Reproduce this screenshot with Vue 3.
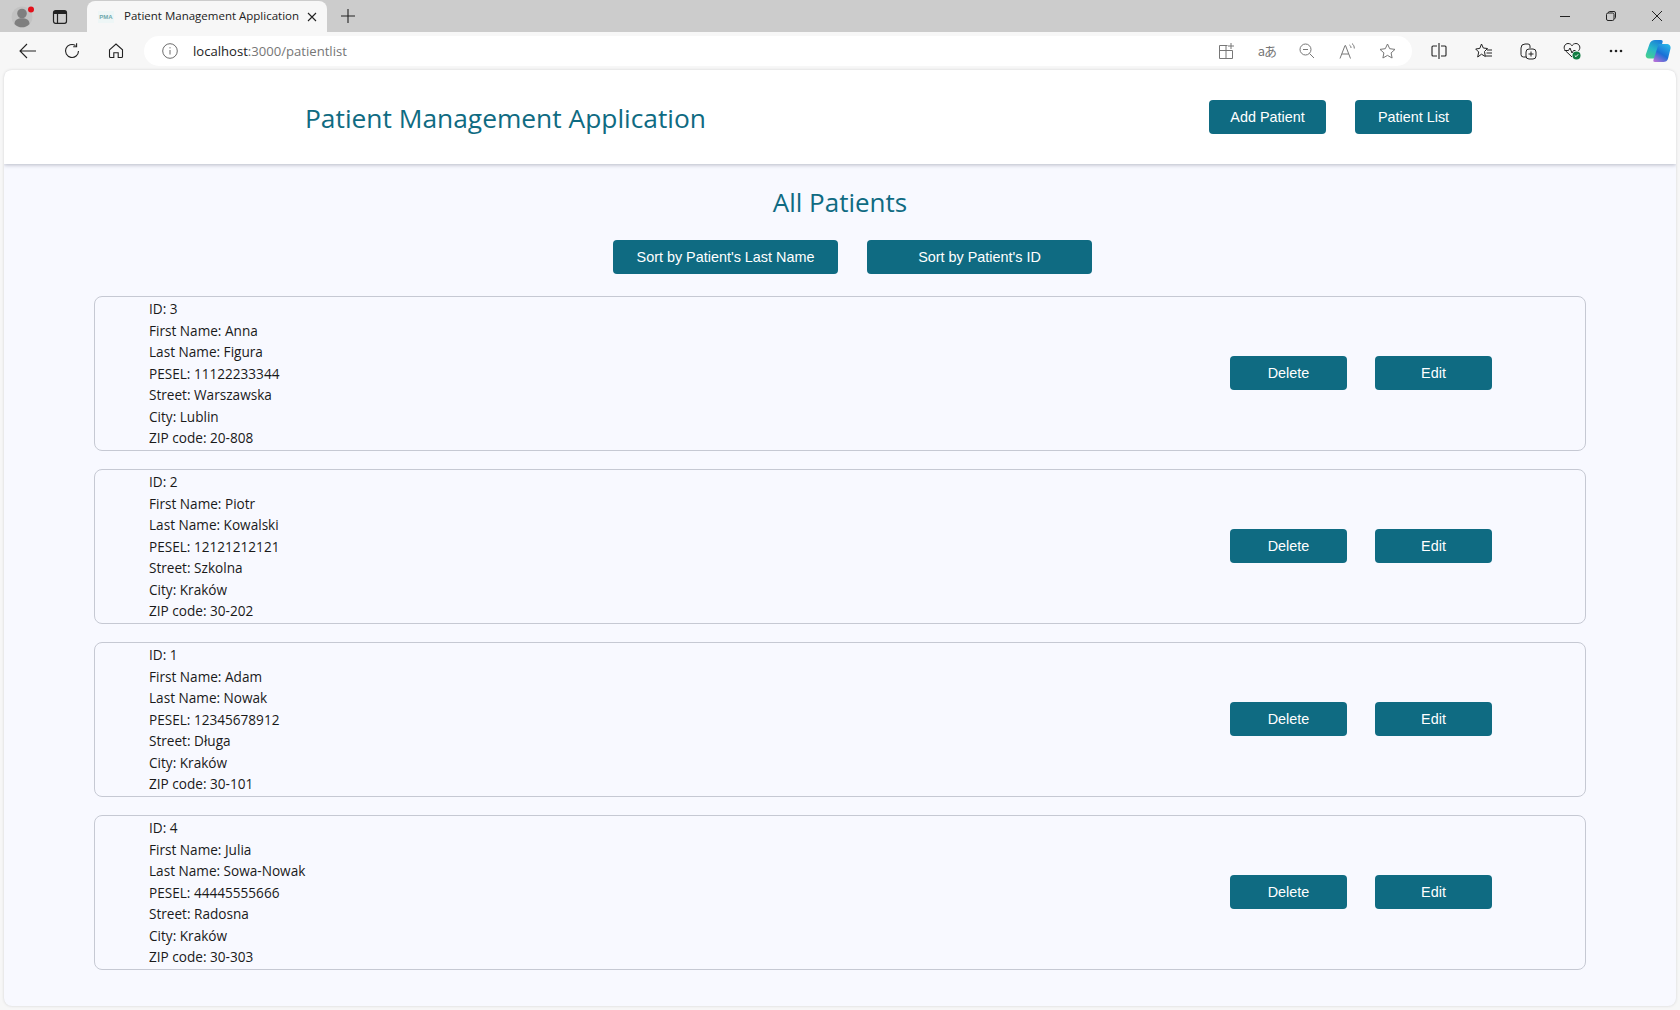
<script setup>
import { ref } from "vue"

const patients = ref([
  { id: 3, first: "Anna", last: "Figura", pesel: "11122233344", street: "Warszawska", city: "Lublin", zip: "20-808" },
  { id: 2, first: "Piotr", last: "Kowalski", pesel: "12121212121", street: "Szkolna", city: "Kraków", zip: "30-202" },
  { id: 1, first: "Adam", last: "Nowak", pesel: "12345678912", street: "Długa", city: "Kraków", zip: "30-101" },
  { id: 4, first: "Julia", last: "Sowa-Nowak", pesel: "44445555666", street: "Radosna", city: "Kraków", zip: "30-303" },
])
</script>

<template>
  <div class="window">
    <div class="tabstrip">
      <div class="avatar">
        <svg width="26" height="26" viewBox="0 0 26 26">
          <circle cx="12" cy="14" r="10.500" fill="#c2c2c2" />
          <circle cx="12" cy="10.500" r="4.800" fill="#7f7f7f" />
          <path d="M4.500 21c0-4.500 3.500-5.800 7.500-5.800s7.500 1.300 7.500 5.800c-2 2.500-4.800 3.300-7.500 3.300s-5.500-.8-7.500-3.300z" fill="#7f7f7f" />
          <circle cx="21" cy="6.500" r="3" fill="#e3101a" />
        </svg>
      </div>
      <div class="tabs-btn">
        <svg width="16" height="16" viewBox="0 0 16 16" fill="none" stroke="#222" stroke-width="1.200">
          <rect x="1.500" y="1.700" width="13" height="12.600" rx="2" />
          <path d="M5.500 5v9.300" />
          <path d="M2 2h12v3H2z" fill="#222" stroke="none" />
        </svg>
      </div>
      <div class="tab">
        <span class="favicon">PMA</span>
        <span class="tab-title">Patient Management Application</span>
        <svg class="tab-close" width="10" height="10" viewBox="0 0 10 10" stroke="#222" stroke-width="1.100">
          <path d="M1 1l8 8M9 1l-8 8" />
        </svg>
      </div>
      <svg class="new-tab" width="14" height="14" viewBox="0 0 14 14" stroke="#222" stroke-width="1.100">
        <path d="M7 0v14M0 7h14" />
      </svg>
      <div class="win-controls">
        <svg width="10" height="10" viewBox="0 0 10 10" stroke="#222" stroke-width="1"><path d="M0 5.500h10" /></svg>
        <svg width="10" height="10" viewBox="0 0 10 10" fill="none" stroke="#222" stroke-width="1">
          <rect x=".5" y="2" width="7.500" height="7.500" rx="1.500" />
          <path d="M2.500 2V1.500A1 1 0 0 1 3.500.5h4.500a1.500 1.500 0 0 1 1.500 1.500v4.500a1 1 0 0 1-1 1" />
        </svg>
        <svg width="10" height="10" viewBox="0 0 10 10" stroke="#222" stroke-width="1"><path d="M0 0l10 10M10 0L0 10" /></svg>
      </div>
    </div>

    <div class="toolbar">
      <div class="nav">
        <svg width="18" height="16" viewBox="0 0 18 16" fill="none" stroke="#222" stroke-width="1.100"><path d="M17 8H1M8 1L1 8l7 7" /></svg>
        <svg width="16" height="16" viewBox="0 0 16 16" fill="none" stroke="#222" stroke-width="1.100">
          <path d="M14.500 8A6.500 6.500 0 1 1 11.500 2.500" />
          <path d="M12.600.3v3.400h-3.400" />
        </svg>
        <svg class="home" width="16" height="16" viewBox="0 0 16 16" fill="none" stroke="#222" stroke-width="1.100">
          <path d="M1.500 6.800L8 1l6.500 5.800V13.500a1 1 0 0 1-1 1H10.200V9.800H5.800v4.700H2.500a1 1 0 0 1-1-1z" />
        </svg>
      </div>
      <div class="address">
        <svg class="info" width="16" height="16" viewBox="0 0 16 16" fill="none" stroke="#6d6d6d" stroke-width="1">
          <circle cx="8" cy="8" r="7.300" />
          <path d="M8 7v4.500M8 4.200v1.200" />
        </svg>
        <span class="url">localhost<span class="url-rest">:3000/patientlist</span></span>
        <div class="addr-icons">
          <svg width="16" height="16" viewBox="0 0 16 16" fill="none" stroke="#777" stroke-width="1">
            <path d="M9.500 2.500H1.500v13h13V7.500H1.500M8 2.500v13M13 0v6M10 3h6" />
          </svg>
          <span class="translate">aあ</span>
          <svg class="zoom-out" width="16" height="16" viewBox="0 0 16 16" fill="none" stroke="#777" stroke-width="1">
            <circle cx="6.500" cy="6.500" r="5.500" /><path d="M4 6.500h5M10.500 10.500L15 15" />
          </svg>
          <svg width="16" height="16" viewBox="0 0 16 16" fill="none" stroke="#777" stroke-width="1">
            <path d="M1 15.500L6 2.500h.5L11.500 15.500M2.800 11h7M10.500 2c1 .7 1.500 1.700 1.500 3M13 .5c1.500 1.200 2.300 2.800 2.300 5" />
          </svg>
          <svg width="17" height="16" viewBox="0 0 17 16" fill="none" stroke="#777" stroke-width="1">
            <path d="M8.500 1l2.200 4.700 5.300.7-3.900 3.500 1 5.100-4.600-2.600-4.600 2.600 1-5.100L1 6.400l5.300-.7z" />
          </svg>
        </div>
      </div>
      <div class="tools">
        <svg width="16" height="16" viewBox="0 0 16 16" fill="none" stroke="#222" stroke-width="1.100">
          <path d="M8 0v16M6 3H2a1 1 0 0 0-1 1v8a1 1 0 0 0 1 1h4M10 3h4a1 1 0 0 1 1 1v8a1 1 0 0 1-1 1h-4" />
        </svg>
        <svg class="fav" width="18" height="16" viewBox="0 0 18 16" fill="none" stroke="#222" stroke-width="1">
          <path d="M6.500 1l1.800 4 4.200.5-3 3 .8 5-3.800-2.300L2.700 14l1-5-3-3 4.100-.6zM12 7h5M11.500 10h5.500M10.500 13h6.500" />
        </svg>
        <svg width="17" height="17" viewBox="0 0 17 17" fill="none" stroke="#222" stroke-width="1">
          <path d="M6 14H3.500A2.500 2.500 0 0 1 1 11.500V5a4 4 0 0 1 4-4h3a2 2 0 0 1 2 2v2" />
          <rect x="6" y="6" width="10" height="10" rx="3" />
          <path d="M11 8.500v5M8.500 11h5" />
        </svg>
        <svg width="18" height="18" viewBox="0 0 18 18" fill="none" stroke="#222" stroke-width="1">
          <path d="M9 15L2.500 8.800C-.5 5.500 2 1.500 5 1.500c2 0 3.300 1 4 2.300.7-1.300 2-2.300 4-2.300 3 0 5.500 4 2.500 7.300" />
          <path d="M1.500 8.500h4l1.500-2.500 2 5 1.500-2.500h2" />
          <circle cx="13.500" cy="13.500" r="4" fill="#107c41" stroke="none" />
          <path d="M11.800 13.500l1.200 1.200 2.200-2.400" stroke="#fff" />
        </svg>
        <svg class="dots" width="14" height="4" viewBox="0 0 14 4" fill="#222">
          <circle cx="2" cy="2" r="1.300" /><circle cx="7" cy="2" r="1.300" /><circle cx="12" cy="2" r="1.300" />
        </svg>
        <svg class="copilot" width="26" height="24" viewBox="0 0 26 24">
          <defs>
            <linearGradient id="cpa" x1="0.700" y1="0" x2="0.200" y2="1">
              <stop offset="0" stop-color="#1b7fd8" /><stop offset=".5" stop-color="#28b6c8" /><stop offset="1" stop-color="#46d08e" />
            </linearGradient>
            <linearGradient id="cpb" x1="0.800" y1="0" x2="0.200" y2="1">
              <stop offset="0" stop-color="#27b5e8" /><stop offset=".55" stop-color="#1a6fd6" /><stop offset="1" stop-color="#b06fd8" />
            </linearGradient>
          </defs>
          <path d="M10 1h6c1.500 0 2 1 1.500 2.500L13 17c-.7 1.800-2 2.500-4 2.500H4c-2.500 0-3.800-1.800-3.200-4L4.500 5C5.400 2.300 7.500 1 10 1z" fill="url(#cpa)" />
          <path d="M14 5h7.500c2.800 0 4.500 1.800 4 4.500l-2.300 9.500c-.7 3-2.700 4-5 4H10c-1.500 0-2-1-1.500-2.300L13 7c.3-1.300.5-2 1-2z" fill="url(#cpb)" />
        </svg>
      </div>
    </div>

    <div class="page">
      <header class="app-header">
        <h1 class="app-title">Patient Management Application</h1>
        <nav class="btn-row">
          <button class="btn">Add Patient</button>
          <button class="btn">Patient List</button>
        </nav>
      </header>

      <h2 class="list-title">All Patients</h2>
      <div class="sort-row">
        <button class="btn btn-wide">Sort by Patient's Last Name</button>
        <button class="btn btn-wide">Sort by Patient's ID</button>
      </div>

      <ul class="patients">
        <li v-for="p in patients" :key="p.id" class="patient">
          <div class="details">
            <div>ID: {{ p.id }}</div>
            <div>First Name: {{ p.first }}</div>
            <div>Last Name: {{ p.last }}</div>
            <div>PESEL: {{ p.pesel }}</div>
            <div>Street: {{ p.street }}</div>
            <div>City: {{ p.city }}</div>
            <div>ZIP code: {{ p.zip }}</div>
          </div>
          <div class="btn-row row-actions">
            <button class="btn">Delete</button>
            <button class="btn">Edit</button>
          </div>
        </li>
      </ul>
    </div>
  </div>
</template>

<style scoped>
.window {
  height: 1010px;
  display: flex;
  flex-direction: column;
  background: #f7f7f7;
  overflow: hidden;
}

.tabstrip {
  height: 32px;
  background: #cccccc;
  display: flex;
  align-items: center;
  flex: none;
}
.avatar {
  width: 26px;
  height: 26px;
  margin-left: 10px;
}
.tabs-btn {
  margin-left: 16px;
  display: flex;
  margin-top: 1px;
}
.tab {
  width: 240px;
  height: 31px;
  margin-left: 19px;
  margin-top: 1px;
  background: #f7f7f7;
  border-radius: 8px 8px 0 0;
  display: flex;
  align-items: center;
  flex: none;
}
.favicon {
  width: 16px;
  margin-left: 11px;
  font: 700 6px "Liberation Sans", sans-serif;
  color: #6fa8ad;
  background: #eef6f6;
  text-align: center;
  line-height: 12px;
}
.tab-title {
  margin-left: 10px;
  margin-top: -1px;
  width: 179px;
  font: 11.500px/16px "Open Sans", sans-serif;
  color: #222;
  white-space: nowrap;
}
.tab-close {
  margin-left: 4px;
}
.new-tab {
  margin-left: 14px;
}
.win-controls {
  margin-left: auto;
  margin-right: 18px;
  display: flex;
  gap: 36px;
}

.toolbar {
  height: 38px;
  display: flex;
  align-items: center;
  flex: none;
}
.nav {
  display: flex;
  align-items: center;
  gap: 27px;
  margin-left: 19px;
  width: 125px;
}
.home {
  margin-left: 1px;
}
.address {
  width: 1268px;
  height: 30px;
  background: #fff;
  border-radius: 15px;
  display: flex;
  align-items: center;
}
.info {
  margin-left: 18px;
}
.url {
  margin-left: 15px;
  font: 13.100px "Open Sans", sans-serif;
  color: #222;
}
.url-rest {
  color: #767676;
}
.addr-icons {
  margin-left: auto;
  margin-right: 16px;
  display: flex;
  align-items: center;
  gap: 24px;
}
.translate {
  font: 13px/16px "Noto Sans CJK JP", "Noto Sans", sans-serif;
  color: #777;
  letter-spacing: -1px;
}
.zoom-out {
  margin-left: -1px;
}
.tools {
  display: flex;
  align-items: center;
  margin-left: 19px;
  gap: 26.500px;
}
.fav {
  margin-left: 1.500px;
}
.dots {
  margin-left: 1.500px;
}
.copilot {
  margin-left: -4.500px;
}

.page {
  flex: 1;
  margin: 0 4px 4px;
  background: #f8f9ff;
  border-radius: 8px;
  box-shadow: 0 0 3px rgba(0, 0, 0, 0.15);
  overflow: hidden;
  font-family: "Open Sans", sans-serif;
}

.app-header {
  height: 94px;
  background: #fff;
  box-shadow: 0 1px 4px rgba(60, 70, 90, 0.35);
  display: flex;
  align-items: center;
  padding-left: 301px;
}
.app-title {
  margin: 1px 0 0;
  width: 904px;
  font-size: 26.350px;
  font-weight: 400;
  color: #0f6b82;
}
.app-header .btn-row {
  margin-top: -1px;
}

.btn-row {
  display: flex;
  gap: 29px;
}
.row-actions {
  gap: 28px;
  margin-bottom: 2px;
}
.btn {
  width: 117px;
  height: 34px;
  padding: 0;
  border: none;
  border-radius: 4px;
  background: #0f6b82;
  color: #fff;
  font: 14.400px "Liberation Sans", sans-serif;
}
.btn-wide {
  width: 225px;
}

.list-title {
  margin: 0;
  padding-top: 20px;
  height: 76px;
  box-sizing: border-box;
  text-align: center;
  font-size: 26px;
  font-weight: 400;
  line-height: 36px;
  color: #0f6b82;
}
.sort-row {
  display: flex;
  justify-content: center;
  gap: 29px;
  padding-left: 25px;
}

.patients {
  list-style: none;
  margin: 22px 90px 0;
  padding: 0;
  display: flex;
  flex-direction: column;
  gap: 18px;
}
.patient {
  height: 155px;
  box-sizing: border-box;
  border: 1px solid #c6c9d3;
  border-radius: 8px;
  display: flex;
  align-items: center;
  justify-content: space-between;
  padding: 0 93px 0 54px;
}
.details {
  font-size: 13.600px;
  line-height: 21.600px;
  color: #1a1a1a;
}
</style>

<style>
html, body {
  margin: 0;
  overflow: hidden;
}
</style>
